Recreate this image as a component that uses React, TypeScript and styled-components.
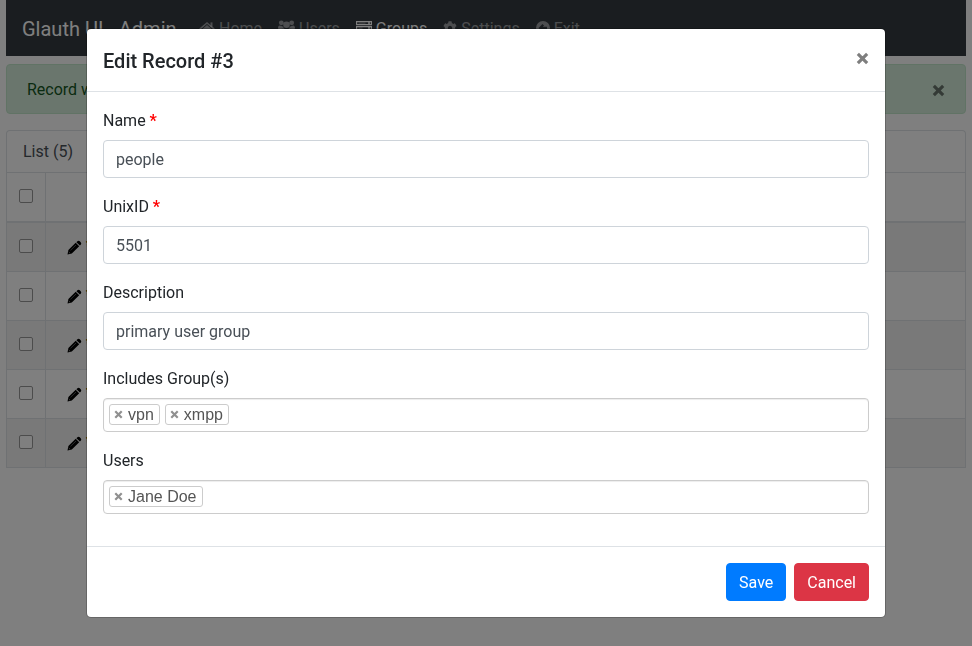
import React from "react";
import styled, { createGlobalStyle } from "styled-components";
import { FaCog, FaTrash } from "react-icons/fa";

const GlobalStyle = createGlobalStyle`
  *, *::before, *::after { box-sizing: border-box; }
  body {
    margin: 0;
    overflow: hidden;
    background: #fff;
    color: #212529;
    font: 400 16px/1.5 Roboto, "Liberation Sans", sans-serif;
  }
  input, button { font: inherit; }
`;

const Page = styled.div`
  height: 646px;
  padding: 0 6px;
`;

const Navbar = styled.nav`
  display: flex;
  align-items: center;
  height: 56px;
  padding: 2px 16px 0;
  background: #343a40;
`;

const Brand = styled.span`
  width: 169px;
  font-size: 20px;
  line-height: 30px;
  color: #fff;
  white-space: nowrap;
`;

const NavLink = styled.a<{ $active?: boolean }>`
  display: flex;
  align-items: center;
  gap: 4px;
  padding: 0 8px;
  color: ${(p) => (p.$active ? "#fff" : "rgba(255,255,255,.5)")};
  svg { flex: none; margin-bottom: 2px; }
`;

const Alert = styled.div`
  display: flex;
  align-items: center;
  justify-content: space-between;
  height: 50px;
  margin: 8px 0 16px;
  padding: 2px 20px 0;
  color: #155724;
  background: #d4edda;
  border: 1px solid #c3e6cb;
  border-radius: 4px;
`;

const CloseButton = styled.button`
  display: flex;
  padding: 0;
  border: 0;
  background: none;
  color: #000;
  opacity: 0.5;
`;

const AlertClose = styled(CloseButton)`
  margin-top: 1px;
`;

const ListTab = styled.div`
  height: 42px;
  padding: 9px 16px;
  color: #495057;
  border: 1px solid #dee2e6;
  border-bottom: 0;
  border-radius: 4px 4px 0 0;
`;

const Table = styled.div`
  border: 1px solid #dee2e6;
  border-top: 0;
`;

const Row = styled.div<{ $head?: boolean; $striped?: boolean }>`
  display: grid;
  grid-template-columns: 39px 1fr;
  height: ${(p) => (p.$head ? 50 : 49)}px;
  border-top: 1px solid #dee2e6;
  border-bottom: ${(p) => (p.$head ? "1px solid #dee2e6" : "0")};
  background: ${(p) => (p.$striped ? "#f2f2f2" : "#fff")};
`;

const CheckCell = styled.div`
  padding: 16px 0 0 12px;
  border-right: 1px solid #dee2e6;
`;

const Checkbox = styled.div`
  width: 14px;
  height: 14px;
  border: 1px solid #999;
  border-radius: 2px;
  background: #fff;
`;

const ActionCell = styled.div`
  display: flex;
  gap: 3px;
  padding: 17px 0 0 21px;
  svg { flex: none; }
`;

const Backdrop = styled.div`
  position: fixed;
  inset: 0;
  display: flex;
  justify-content: center;
  align-items: flex-start;
  padding-top: 28px;
  background: rgba(0, 0, 0, 0.5);
`;

const Modal = styled.section`
  width: 800px;
  background: #fff;
  background-clip: padding-box;
  border: 1px solid rgba(0, 0, 0, 0.2);
  border-radius: 5px;
`;

const ModalHeader = styled.header`
  display: flex;
  justify-content: space-between;
  height: 63px;
  padding: 17px 16px 15px;
  border-bottom: 1px solid #dee2e6;
`;

const ModalTitle = styled.h5`
  margin: 0;
  font-size: 20px;
  font-weight: 500;
  line-height: 30px;
`;

const HeaderClose = styled(CloseButton)`
  margin-top: 6px;
  height: 13px;
`;

const ModalBody = styled.div`
  padding: 16px;
`;

const Field = styled.div`
  margin-bottom: 16px;
`;

const Label = styled.label`
  display: block;
  padding-top: 1px;
  margin-bottom: 7px;
`;

const Required = styled.span`
  color: red;
  font-weight: 700;
`;

const TextInput = styled.input`
  display: block;
  width: 100%;
  height: 38px;
  padding: 6px 12px;
  color: #495057;
  background: #fff;
  border: 1px solid #ced4da;
  border-radius: 4px;
  outline: 0;
`;

const TagBox = styled.div`
  display: flex;
  gap: 5px;
  height: 34px;
  padding: 5px;
  border: 1px solid #ccc;
  border-radius: 4px;
  box-shadow: inset 0 1px 1px rgba(0, 0, 0, 0.075);
`;

const Tag = styled.span`
  display: flex;
  align-items: center;
  height: 21px;
  padding: 0 5px 0 4px;
  gap: 5px;
  color: #555;
  font: 16px/19px "Liberation Sans", sans-serif;
  border: 1px solid #ccc;
  border-radius: 3px;
  svg { color: #909090; }
`;

const ModalFooter = styled.footer`
  display: flex;
  justify-content: flex-end;
  gap: 8px;
  padding: 16px;
  border-top: 1px solid #dee2e6;
`;

const Button = styled.button<{ $tone: string }>`
  height: 38px;
  padding: 7px 12px 5px;
  color: #fff;
  background: ${(p) => p.$tone};
  border: 1px solid ${(p) => p.$tone};
  border-radius: 4px;
`;

const Cross = ({ size }: { size: number }) => (
  <svg width={size} height={size} viewBox="0 0 12 12" stroke="currentColor" strokeWidth={2.9}>
    <path d="M1.7 1.7 10.3 10.3M10.3 1.7 1.7 10.3" />
  </svg>
);

const Pencil = () => (
  <svg width="15" height="15" viewBox="0 0 15 15" fill="#000">
    <path d="M10.4 1.3Q11.6.2 12.8 1.3L13.9 2.4Q14.8 3.5 13.7 4.7L12.9 5.6 9.4 2.2ZM8.7 2.8 12.2 6.3 4.8 13.5.5 14.5 1.4 10.1Z" />
    <path d="M3.5 10.3 9 5" stroke="#777b80" strokeWidth=".7" />
    <path d="M1.8 12 3 13.2" stroke="#aaa" strokeWidth=".7" />
  </svg>
);

const HomeIcon = () => (
  <svg width="16" height="16" viewBox="0 0 16 16" fill="none" stroke="currentColor">
    <path d="M.8 9.2 8 3 15.2 9.2" strokeWidth="1.6" />
    <path d="M12.5 2.4v4.5" strokeWidth="2" />
    <path d="M2.8 9.4 8 5 13.2 9.4V14H9.5V10.4H6.5V14H2.8Z" fill="currentColor" stroke="none" />
  </svg>
);

const UsersIcon = () => (
  <svg width="17" height="16" viewBox="0 0 17 16" fill="currentColor">
    <circle cx="3.3" cy="2.8" r="2.4" />
    <circle cx="13.7" cy="2.8" r="2.4" />
    <circle cx="8.5" cy="4.8" r="3.3" />
    <path d="M0 8.6Q0 5.6 1.7 5.6Q4 6.6 5 6.4Q5.3 7.6 6 8.2L3.5 9H1Q0 9 0 8.6ZM17 8.6Q17 5.6 15.3 5.6Q13 6.6 12 6.4Q11.7 7.6 11 8.2L13.5 9H16Q17 9 17 8.6Z" />
    <path d="M3 13Q3 8.6 5.8 8.6Q8.5 10.7 11.2 8.6Q14 8.6 14 13Q14 15 12 15H5Q3 15 3 13Z" />
  </svg>
);

const ServerIcon = () => (
  <svg width="16" height="16" viewBox="0 0 16 16" fill="none" stroke="currentColor">
    <path d="M.6 1.6H15.4V4.6H.6ZM.6 6.6H15.4V9.6H.6ZM.6 11.6H15.4V14.6H.6Z" strokeWidth="1.2" />
    <path d="M2.5 3.1H9.5M2.5 8.1H6.5M2.5 13.1H11.5" strokeWidth="1" opacity=".45" />
    <path d="M12 3.1H14M12 8.1H14M12 13.1H14" strokeWidth="1.5" />
  </svg>
);

const ExitIcon = () => (
  <svg width="14" height="16" viewBox="0 0 14 16" fill="currentColor">
    <path fillRule="evenodd" d="M7 1A7 7 0 1 1 7 15A7 7 0 0 1 7 1ZM6.5 4 2.5 8 6.5 12 8 10.5 6.8 9.2H11V6.8H6.8L8 5.5Z" />
  </svg>
);

const fields = [
  { label: "Name", value: "people", required: true },
  { label: "UnixID", value: "5501", required: true },
  { label: "Description", value: "primary user group", required: false },
];

const tagFields = [
  { label: "Includes Group(s)", tags: ["vpn", "xmpp"] },
  { label: "Users", tags: ["Jane Doe"] },
];

export default function App() {
  return (
    <>
      <GlobalStyle />
      <Page>
        <Navbar>
          <Brand>Glauth UI - Admin</Brand>
          <NavLink><HomeIcon />Home</NavLink>
          <NavLink><UsersIcon />Users</NavLink>
          <NavLink $active><ServerIcon />Groups</NavLink>
          <NavLink><FaCog size={14} />Settings</NavLink>
          <NavLink><ExitIcon />Exit</NavLink>
        </Navbar>
        <Alert>
          <span>Record was saved</span>
          <AlertClose aria-label="Dismiss"><Cross size={13} /></AlertClose>
        </Alert>
        <ListTab>List (5)</ListTab>
        <Table>
          <Row $head>
            <CheckCell><Checkbox /></CheckCell>
          </Row>
          {[0, 1, 2, 3, 4].map((i) => (
            <Row key={i} $striped={i % 2 === 0}>
              <CheckCell><Checkbox /></CheckCell>
              <ActionCell><Pencil /><FaTrash size={14} color="#b38600" /></ActionCell>
            </Row>
          ))}
        </Table>
      </Page>
      <Backdrop>
        <Modal role="dialog">
          <ModalHeader>
            <ModalTitle>Edit Record #3</ModalTitle>
            <HeaderClose aria-label="Close"><Cross size={13} /></HeaderClose>
          </ModalHeader>
          <ModalBody>
            {fields.map((f) => (
              <Field key={f.label}>
                <Label>{f.label}{f.required && <Required> *</Required>}</Label>
                <TextInput defaultValue={f.value} />
              </Field>
            ))}
            {tagFields.map((f) => (
              <Field key={f.label}>
                <Label>{f.label}</Label>
                <TagBox>
                  {f.tags.map((t) => (
                    <Tag key={t}><Cross size={9} />{t}</Tag>
                  ))}
                </TagBox>
              </Field>
            ))}
          </ModalBody>
          <ModalFooter>
            <Button $tone="#007bff">Save</Button>
            <Button $tone="#dc3545">Cancel</Button>
          </ModalFooter>
        </Modal>
      </Backdrop>
    </>
  );
}
